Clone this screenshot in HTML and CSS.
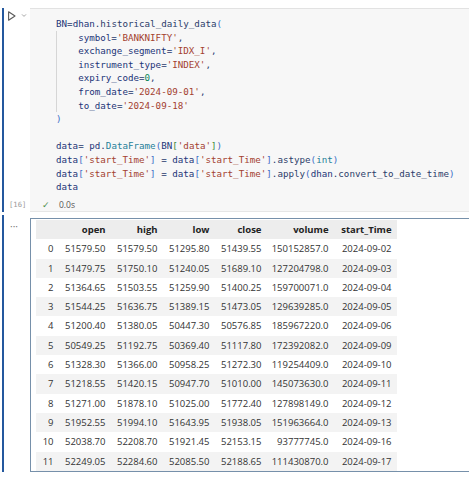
FILE: index.html
```html
<!DOCTYPE html>
<html>
<head>
<meta charset="utf-8">
<link rel="stylesheet" href="styles.css">
</head>
<body>
<div class="nb">
  <div class="cell code-cell">
    <div class="bar"></div>
    <div class="gutter">
      <svg class="run" width="26" height="16" viewBox="0 0 26 16">
        <path d="M4.6 3.8 L11 8 L4.6 12.2 Z" fill="none" stroke="#5a5a5a" stroke-width="1.1" stroke-linejoin="round"/>
        <path d="M18 6.4 L20 8.4 L22 6.4" fill="none" stroke="#9a9a9a" stroke-width="0.9"/>
      </svg>
      <div class="count">[16]</div>
    </div>
    <div class="editor">
      <div class="code">
        <div class="ln"><span class="v">BN</span>=<span class="v">dhan</span>.<span class="f">historical_daily_data</span><span class="b1">(</span></div>
        <div class="ind">
          <div class="ln">    <span class="v">symbol</span>=<span class="s">'BANKNIFTY'</span>,</div>
          <div class="ln">    <span class="v">exchange_segment</span>=<span class="s">'IDX_I'</span>,</div>
          <div class="ln">    <span class="v">instrument_type</span>=<span class="s">'INDEX'</span>,</div>
          <div class="ln">    <span class="v">expiry_code</span>=<span class="n">0</span>,</div>
          <div class="ln">    <span class="v">from_date</span>=<span class="s">'2024-09-01'</span>,</div>
          <div class="ln">    <span class="v">to_date</span>=<span class="s">'2024-09-18'</span></div>
        </div>
        <div class="ln"><span class="b1">)</span></div>
        <div class="ln"> </div>
        <div class="ln"><span class="v">data</span>= <span class="v">pd</span>.<span class="c">DataFrame</span><span class="b1">(</span><span class="v">BN</span><span class="b2">[</span><span class="s">'data'</span><span class="b2">]</span><span class="b1">)</span></div>
        <div class="ln"><span class="v">data</span><span class="b1">[</span><span class="s">'start_Time'</span><span class="b1">]</span> = <span class="v">data</span><span class="b1">[</span><span class="s">'start_Time'</span><span class="b1">]</span>.<span class="f">astype</span><span class="b1">(</span><span class="c">int</span><span class="b1">)</span></div>
        <div class="ln"><span class="v">data</span><span class="b1">[</span><span class="s">'start_Time'</span><span class="b1">]</span> = <span class="v">data</span><span class="b1">[</span><span class="s">'start_Time'</span><span class="b1">]</span>.<span class="f">apply</span><span class="b1">(</span><span class="v">dhan</span>.<span class="f">convert_to_date_time</span><span class="b1">)</span></div>
        <div class="ln"><span class="v">data</span></div>
      </div>
      <div class="status"><span class="check">✓</span><span class="time">0.0s</span></div>
    </div>
  </div>

  <div class="cell out-cell">
    <div class="bar"></div>
    <div class="gutter"><div class="more">···</div></div>
    <div class="output">
      <table class="df">
        <colgroup>
          <col class="w-idx"><col class="w-num"><col class="w-num"><col class="w-num"><col class="w-num"><col class="w-vol"><col class="w-date">
        </colgroup>
        <thead>
          <tr><th></th><th>open</th><th>high</th><th>low</th><th>close</th><th>volume</th><th>start_Time</th></tr>
        </thead>
        <tbody>
          <tr><th>0</th><td>51579.50</td><td>51579.50</td><td>51295.80</td><td>51439.55</td><td>150152857.0</td><td>2024-09-02</td></tr>
          <tr><th>1</th><td>51479.75</td><td>51750.10</td><td>51240.05</td><td>51689.10</td><td>127204798.0</td><td>2024-09-03</td></tr>
          <tr><th>2</th><td>51364.65</td><td>51503.55</td><td>51259.90</td><td>51400.25</td><td>159700071.0</td><td>2024-09-04</td></tr>
          <tr><th>3</th><td>51544.25</td><td>51636.75</td><td>51389.15</td><td>51473.05</td><td>129639285.0</td><td>2024-09-05</td></tr>
          <tr><th>4</th><td>51200.40</td><td>51380.05</td><td>50447.30</td><td>50576.85</td><td>185967220.0</td><td>2024-09-06</td></tr>
          <tr><th>5</th><td>50549.25</td><td>51192.75</td><td>50369.40</td><td>51117.80</td><td>172392082.0</td><td>2024-09-09</td></tr>
          <tr><th>6</th><td>51328.30</td><td>51366.00</td><td>50958.25</td><td>51272.30</td><td>119254409.0</td><td>2024-09-10</td></tr>
          <tr><th>7</th><td>51218.55</td><td>51420.15</td><td>50947.70</td><td>51010.00</td><td>145073630.0</td><td>2024-09-11</td></tr>
          <tr><th>8</th><td>51271.00</td><td>51878.10</td><td>51025.00</td><td>51772.40</td><td>127898149.0</td><td>2024-09-12</td></tr>
          <tr><th>9</th><td>51952.55</td><td>51994.10</td><td>51643.95</td><td>51938.05</td><td>151963664.0</td><td>2024-09-13</td></tr>
          <tr><th>10</th><td>52038.70</td><td>52208.70</td><td>51921.45</td><td>52153.15</td><td>93777745.0</td><td>2024-09-16</td></tr>
          <tr><th>11</th><td>52249.05</td><td>52284.60</td><td>52085.50</td><td>52188.65</td><td>111430870.0</td><td>2024-09-17</td></tr>
        </tbody>
      </table>
    </div>
  </div>
</div>
</body>
</html>
```

FILE: styles.css
```css
html, body {
  margin: 0;
  padding: 0;
  background: #ffffff;
}

body {
  width: 469px;
  height: 500px;
  overflow: hidden;
  font-family: "Open Sans", "Noto Sans", sans-serif;
}

.nb {
  padding-top: 8px;
}

.cell {
  display: flex;
}

.bar {
  flex: none;
  width: 2px;
  margin-left: 2px;
  background: #24589e;
}

.gutter {
  flex: none;
  width: 26px;
  display: flex;
  flex-direction: column;
  justify-content: space-between;
}

.run {
  display: block;
}

.count {
  height: 12px;
  line-height: 12px;
  margin-bottom: 1px;
  padding-left: 5px;
  font-family: "DejaVu Sans Mono", monospace;
  font-size: 7.2px;
  color: #9a9a9a;
}

.editor {
  flex: 1;
  height: 204px;
  box-sizing: border-box;
  background: #f7f7f7;
  border-top: 1px solid #e2e2e2;
  border-bottom: 1px solid #e6e6e6;
  display: flex;
  flex-direction: column;
}

.code {
  padding: 8px 0 0 26px;
  font-family: "DejaVu Sans Mono", monospace;
  font-size: 9.2px;
  line-height: 13.6px;
  color: #2a3a6e;
}

.ln {
  height: 13.6px;
  white-space: pre;
}

.ind {
  box-shadow: inset 1px 0 0 #d6d6d6;
}

.v { color: #1d3577; }
.f { color: #2c3d6a; }
.s { color: #a3412f; }
.n { color: #098658; }
.c { color: #267f99; }
.b1 { color: #3b6cc6; }
.b2 { color: #3a8a3a; }

.status {
  margin-top: auto;
  height: 12px;
  line-height: 12px;
  padding-left: 12px;
  display: flex;
  align-items: center;
  gap: 9px;
  font-size: 8.5px;
  color: #555555;
}

.check {
  color: #4f8f4f;
  font-size: 9px;
}

.out-cell {
  margin-top: 3px;
  padding-bottom: 6px;
}

.more {
  padding: 5px 0 0 6px;
  font-size: 10px;
  line-height: 12px;
  color: #777777;
}

.output {
  flex: 1;
  margin-top: 3px;
  border: 1px solid #7690aa;
  border-right: none;
  padding: 1px 0 0 5px;
}

.df {
  border-collapse: collapse;
  table-layout: fixed;
  width: 361px;
  font-family: "Open Sans", "Noto Sans", sans-serif;
  font-size: 9.5px;
  color: #333333;
}

.w-idx { width: 23px; }
.w-num { width: 52px; }
.w-vol { width: 67px; }
.w-date { width: 63px; }

.df th,
.df td {
  padding: 0 5.5px 0 0;
  height: 19.3px;
  line-height: 19.3px;
  text-align: right;
  white-space: nowrap;
}

.df thead th {
  background: #ededed;
  font-weight: 700;
  color: #222222;
}

.df tbody th {
  font-weight: 400;
}

.df tbody tr:nth-child(even) {
  background: #f3f3f3;
}
```
